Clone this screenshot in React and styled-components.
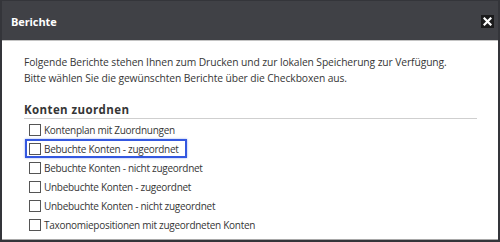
import React from 'react'
import styled, { createGlobalStyle } from 'styled-components'

const reports = [
    { label: 'Kontenplan mit Zuordnungen' },
    { label: 'Bebuchte Konten - zugeordnet', focused: true },
    { label: 'Bebuchte Konten - nicht zugeordnet' },
    { label: 'Unbebuchte Konten - zugeordnet' },
    { label: 'Unbebuchte Konten - nicht zugeordnet' },
    { label: 'Taxonomiepositionen mit zugeordneten Konten' },
]

function App() {
    return (
        <>
            <GlobalStyle />
            <Dialog>
                <Header>
                    <Title>Berichte</Title>
                    <CloseButton aria-label="Schließen">
                        <svg width="9" height="9" viewBox="0 0 9 9">
                            <path d="M1.5 1.5 L7.5 7.5 M7.5 1.5 L1.5 7.5" stroke="#fff" strokeWidth="2.2" strokeLinecap="square" />
                        </svg>
                    </CloseButton>
                </Header>
                <Body>
                    <Intro>
                        Folgende Berichte stehen Ihnen zum Drucken und zur lokalen Speicherung zur Verfügung.
                        <br />
                        Bitte wählen Sie die gewünschten Berichte über die Checkboxen aus.
                    </Intro>
                    <SectionTitle>Konten zuordnen</SectionTitle>
                    <List>
                        {reports.map((r, i) => (
                            <Row key={i} $focused={r.focused}>
                                <Box />
                                <span>{r.label}</span>
                            </Row>
                        ))}
                    </List>
                </Body>
            </Dialog>
        </>
    )
}

export default App

const GlobalStyle = createGlobalStyle`
    html, body {
        margin: 0;
        padding: 0;
        background: #fff;
    }
    body {
        font-family: "Open Sans", "Noto Sans", sans-serif;
    }
`

const Dialog = styled.div`
    width: 500px;
    height: 242px;
    box-sizing: border-box;
    border: 2px solid #34353a;
    border-top-width: 1px;
    box-shadow: inset 0 -1px 0 #a8a8a8;
    background: #fff;
    display: flex;
    flex-direction: column;
    overflow: hidden;
`

const Header = styled.div`
    height: 39px;
    flex-shrink: 0;
    background: #404146;
    border-bottom: 1px solid #c4c4c4;
    display: flex;
    align-items: center;
    justify-content: space-between;
    padding: 0 4px 0 9px;
`

const Title = styled.div`
    color: #fff;
    font-weight: 700;
    font-size: 11px;
    letter-spacing: -0.1px;
    margin-top: 1px;
`

const CloseButton = styled.div`
    width: 13px;
    height: 13px;
    background: #1b1b1c;
    display: flex;
    align-items: center;
    justify-content: center;
    margin-top: 2px;
`

const Body = styled.div`
    padding: 13px 21px 0 22px;
    color: #363636;
`

const Intro = styled.p`
    margin: 0;
    font-size: 10.3px;
    letter-spacing: -0.1px;
    line-height: 16px;
    white-space: nowrap;
`

const SectionTitle = styled.div`
    margin-top: 16px;
    font-size: 11.5px;
    font-weight: 700;
    letter-spacing: 0.4px;
    line-height: 16px;
    border-bottom: 1px solid #cfcfcf;
`

const List = styled.div`
    display: flex;
    flex-direction: column;
    align-items: flex-start;
    padding-top: 1px;
    font-size: 10px;
    letter-spacing: -0.28px;
`

const Row = styled.div`
    height: 19px;
    box-sizing: border-box;
    display: flex;
    align-items: center;
    gap: 3px;
    width: ${p => (p.$focused ? '162px' : 'auto')};
    border: 2px solid ${p => (p.$focused ? '#3458e0' : 'transparent')};
    box-shadow: ${p => (p.$focused ? '0 0 2px rgba(52, 88, 224, 0.5)' : 'none')};
    margin-left: 1px;
    padding-left: 2px;
    white-space: nowrap;
`

const Box = styled.span`
    width: 10px;
    height: 10px;
    border: 1px solid #555;
    background: #fff;
    flex-shrink: 0;
`
